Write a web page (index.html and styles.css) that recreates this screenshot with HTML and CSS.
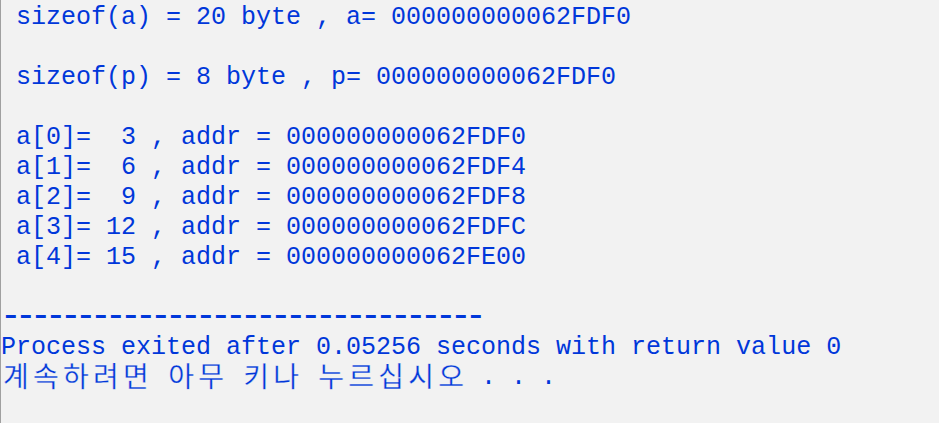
FILE: index.html
```html
<!DOCTYPE html>
<html lang="ko">
<head>
<meta charset="utf-8">
<link rel="stylesheet" href="styles.css">
</head>
<body>
<div class="console">
<div class="ln"> sizeof(a) = 20 byte , a= 000000000062FDF0</div>
<div class="ln"></div>
<div class="ln"> sizeof(p) = 8 byte , p= 000000000062FDF0</div>
<div class="ln"></div>
<div class="ln"> a[0]=  3 , addr = 000000000062FDF0</div>
<div class="ln"> a[1]=  6 , addr = 000000000062FDF4</div>
<div class="ln"> a[2]=  9 , addr = 000000000062FDF8</div>
<div class="ln"> a[3]= 12 , addr = 000000000062FDFC</div>
<div class="ln"> a[4]= 15 , addr = 000000000062FE00</div>
<div class="ln"></div>
<div class="ln"><span class="dash">--------------------------------</span></div>
<div class="ln">Process exited after 0.05256 seconds with return value 0</div>
<div class="ln"><span class="k">계</span><span class="k">속</span><span class="k">하</span><span class="k">려</span><span class="k">면</span> <span class="k">아</span><span class="k">무</span> <span class="k">키</span><span class="k">나</span> <span class="k">누</span><span class="k">르</span><span class="k">십</span><span class="k">시</span><span class="k">오</span> . . .</div>
</div>
</body>
</html>
```
FILE: styles.css
```css
html, body {
  margin: 0;
  padding: 0;
  background: #f2f2f2;
}
.console {
  width: 938px;
  height: 423px;
  border-left: 1px solid #a0a0a0;
  padding-top: 3px;
  box-sizing: border-box;
  font-family: "Liberation Mono", monospace;
  font-size: 25px;
  color: #0037da;
}
.ln {
  height: 30px;
  line-height: 30px;
  white-space: pre;
}
.k {
  display: inline-block;
  width: 30px;
  height: 30px;
  text-align: center;
  vertical-align: top;
  font-family: "Noto Sans CJK KR", sans-serif;
  font-size: 28px;
  line-height: 24px;
  -webkit-text-stroke: 0.3px #f2f2f2;
}
.dash {
  display: inline-block;
  height: 30px;
  vertical-align: top;
  font-size: 36px;
  letter-spacing: -6.6px;
  line-height: 30px;
  transform: translate(-1px, -1px);
}
```
